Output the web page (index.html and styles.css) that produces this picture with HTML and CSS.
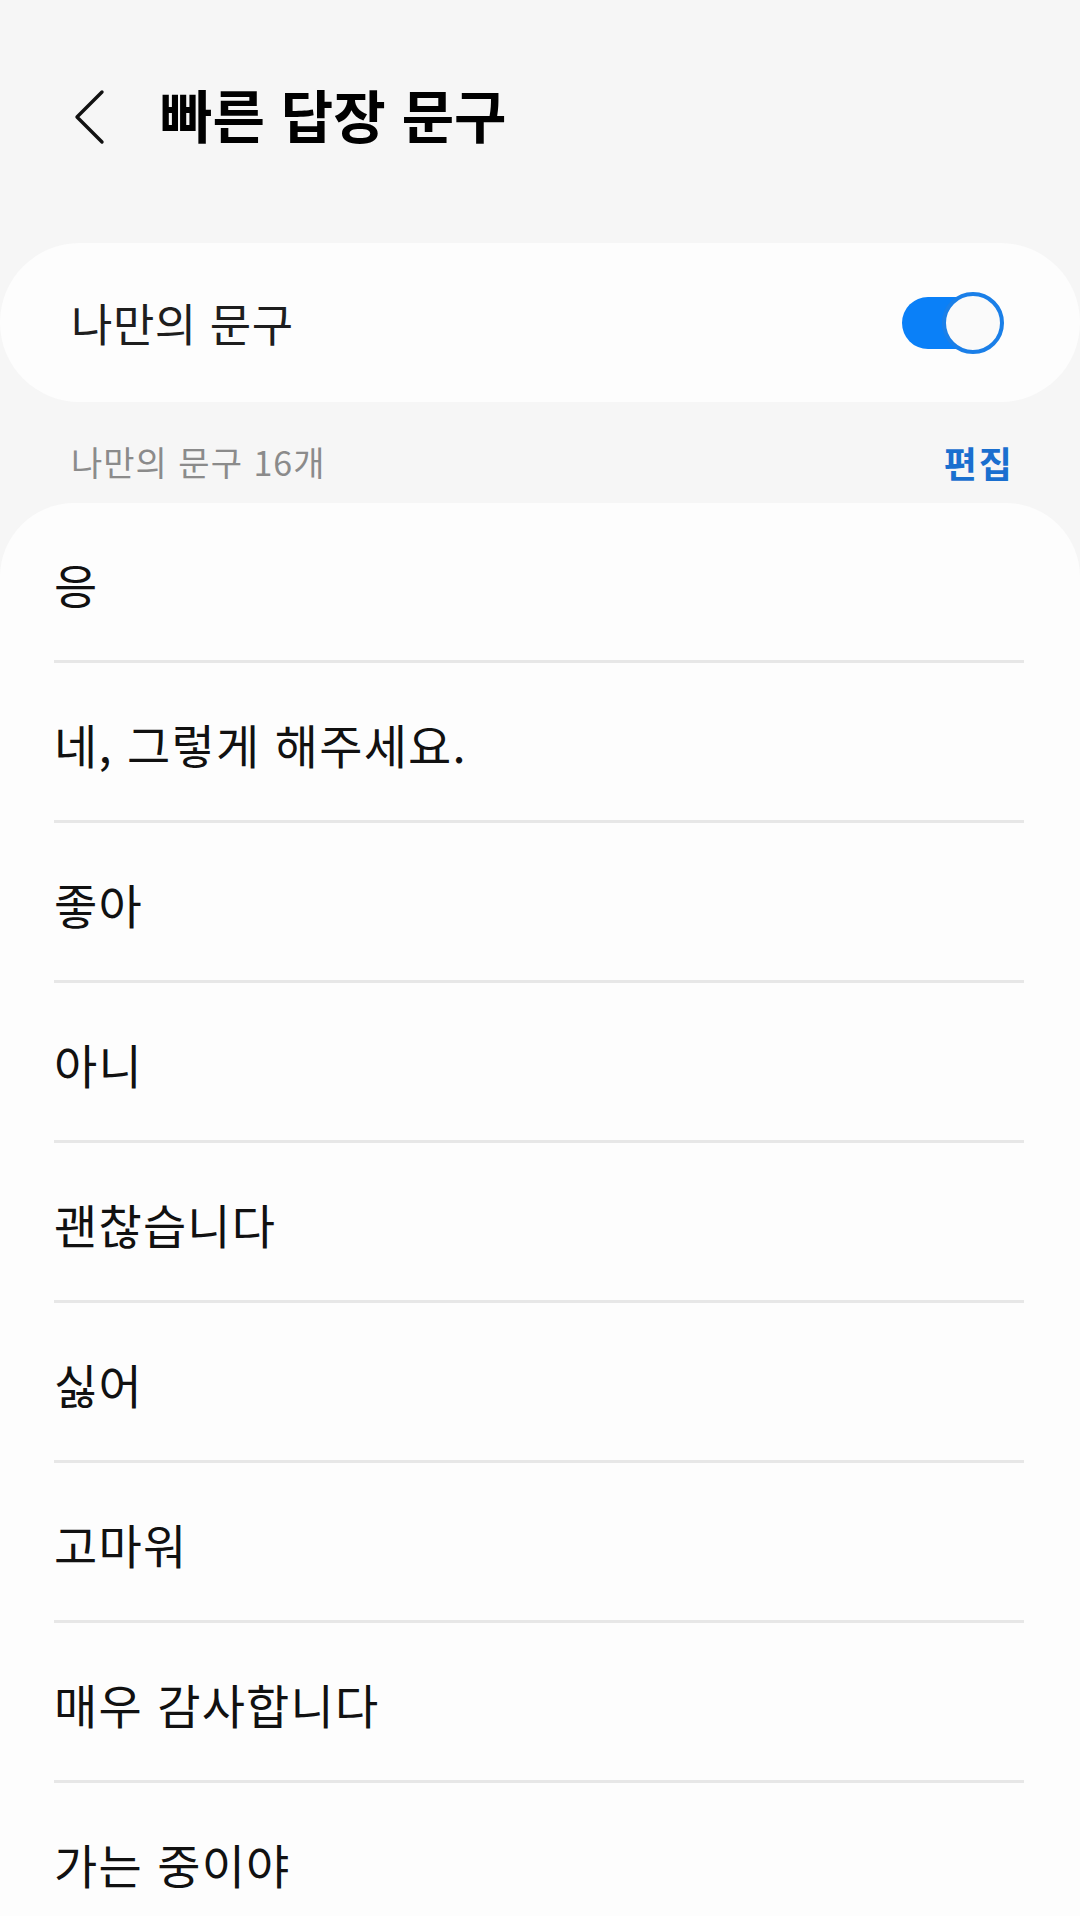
FILE: index.html
```html
<!DOCTYPE html>
<html lang="ko">
<head>
<meta charset="utf-8">
<title>빠른 답장 문구</title>
<link rel="stylesheet" href="styles.css">
</head>
<body>
<header class="appbar">
  <button class="back" aria-label="뒤로">
    <svg width="32" height="56" viewBox="0 0 32 56"><path d="M29 3 L4 28 L29 53" fill="none" stroke="#111" stroke-width="3.4" stroke-linecap="round" stroke-linejoin="round"/></svg>
  </button>
  <h1 class="title">빠른 답장 문구</h1>
</header>

<section class="switch-card">
  <span class="switch-label">나만의 문구</span>
  <span class="switch">
    <span class="track"></span>
    <span class="thumb"></span>
  </span>
</section>

<div class="subheader">
  <span class="count">나만의 문구 16개</span>
  <span class="edit">편집</span>
</div>

<ul class="list">
  <li class="item">응</li>
  <li class="item">네, 그렇게 해주세요.</li>
  <li class="item">좋아</li>
  <li class="item">아니</li>
  <li class="item">괜찮습니다</li>
  <li class="item">싫어</li>
  <li class="item">고마워</li>
  <li class="item">매우 감사합니다</li>
  <li class="item">가는 중이야</li>
</ul>
</body>
</html>
```

FILE: styles.css
```css
html, body {
  margin: 0;
  padding: 0;
}
html {
  height: 1916px;
  overflow: hidden;
}
body {
  width: 1080px;
  min-height: 1916px;
  background: #f6f6f6;
  font-family: "Noto Sans CJK KR", "Noto Sans", sans-serif;
  color: #111;
}

.appbar {
  height: 243px;
  box-sizing: border-box;
  padding: 0 0 9px 73px;
  display: flex;
  align-items: center;
}
.back {
  border: 0;
  background: none;
  padding: 0;
  margin: 0;
  width: 32px;
  height: 56px;
  display: flex;
}
.title {
  margin: 0 0 0 55px;
  font-size: 57px;
  line-height: 64px;
  font-weight: 700;
  letter-spacing: 0;
  color: #000;
  position: relative;
  top: -4px;
}

.switch-card {
  height: 159px;
  box-sizing: border-box;
  background: #fdfdfd;
  border-radius: 80px;
  display: flex;
  align-items: center;
  justify-content: space-between;
  padding: 0 76px 0 71px;
}
.switch-label {
  font-size: 45px;
  line-height: 56px;
  letter-spacing: 0.5px;
  color: #1e1e1e;
}
.switch {
  position: relative;
  width: 102px;
  height: 62px;
  display: block;
}
.track {
  display: block;
  margin-top: 5px;
  width: 80px;
  height: 52px;
  border-radius: 26px;
  background: #0a80f8;
}
.thumb {
  position: absolute;
  right: 0;
  top: 0;
  width: 62px;
  height: 62px;
  box-sizing: border-box;
  border-radius: 50%;
  border: 4px solid #1a7fe8;
  background: #fafafa;
}

.subheader {
  height: 101px;
  box-sizing: border-box;
  padding: 18px 66px 0 71px;
  display: flex;
  align-items: center;
  justify-content: space-between;
}
.count {
  font-size: 34px;
  line-height: 44px;
  letter-spacing: 1px;
  color: #8b8b8b;
}
.edit {
  font-size: 36px;
  line-height: 44px;
  letter-spacing: 2px;
  font-weight: 700;
  color: #1a6fcf;
}

.list {
  list-style: none;
  margin: 0;
  padding: 0;
  background: #fdfdfd;
  border-radius: 74px 74px 0 0;
  min-height: 1413px;
}
.item {
  height: 160px;
  box-sizing: border-box;
  margin: 0 56px 0 54px;
  padding-top: 4px;
  border-bottom: 3px solid #e7e7e7;
  display: flex;
  align-items: center;
  font-size: 47px;
  line-height: 56px;
  letter-spacing: 1.2px;
  color: #111;
}
```
